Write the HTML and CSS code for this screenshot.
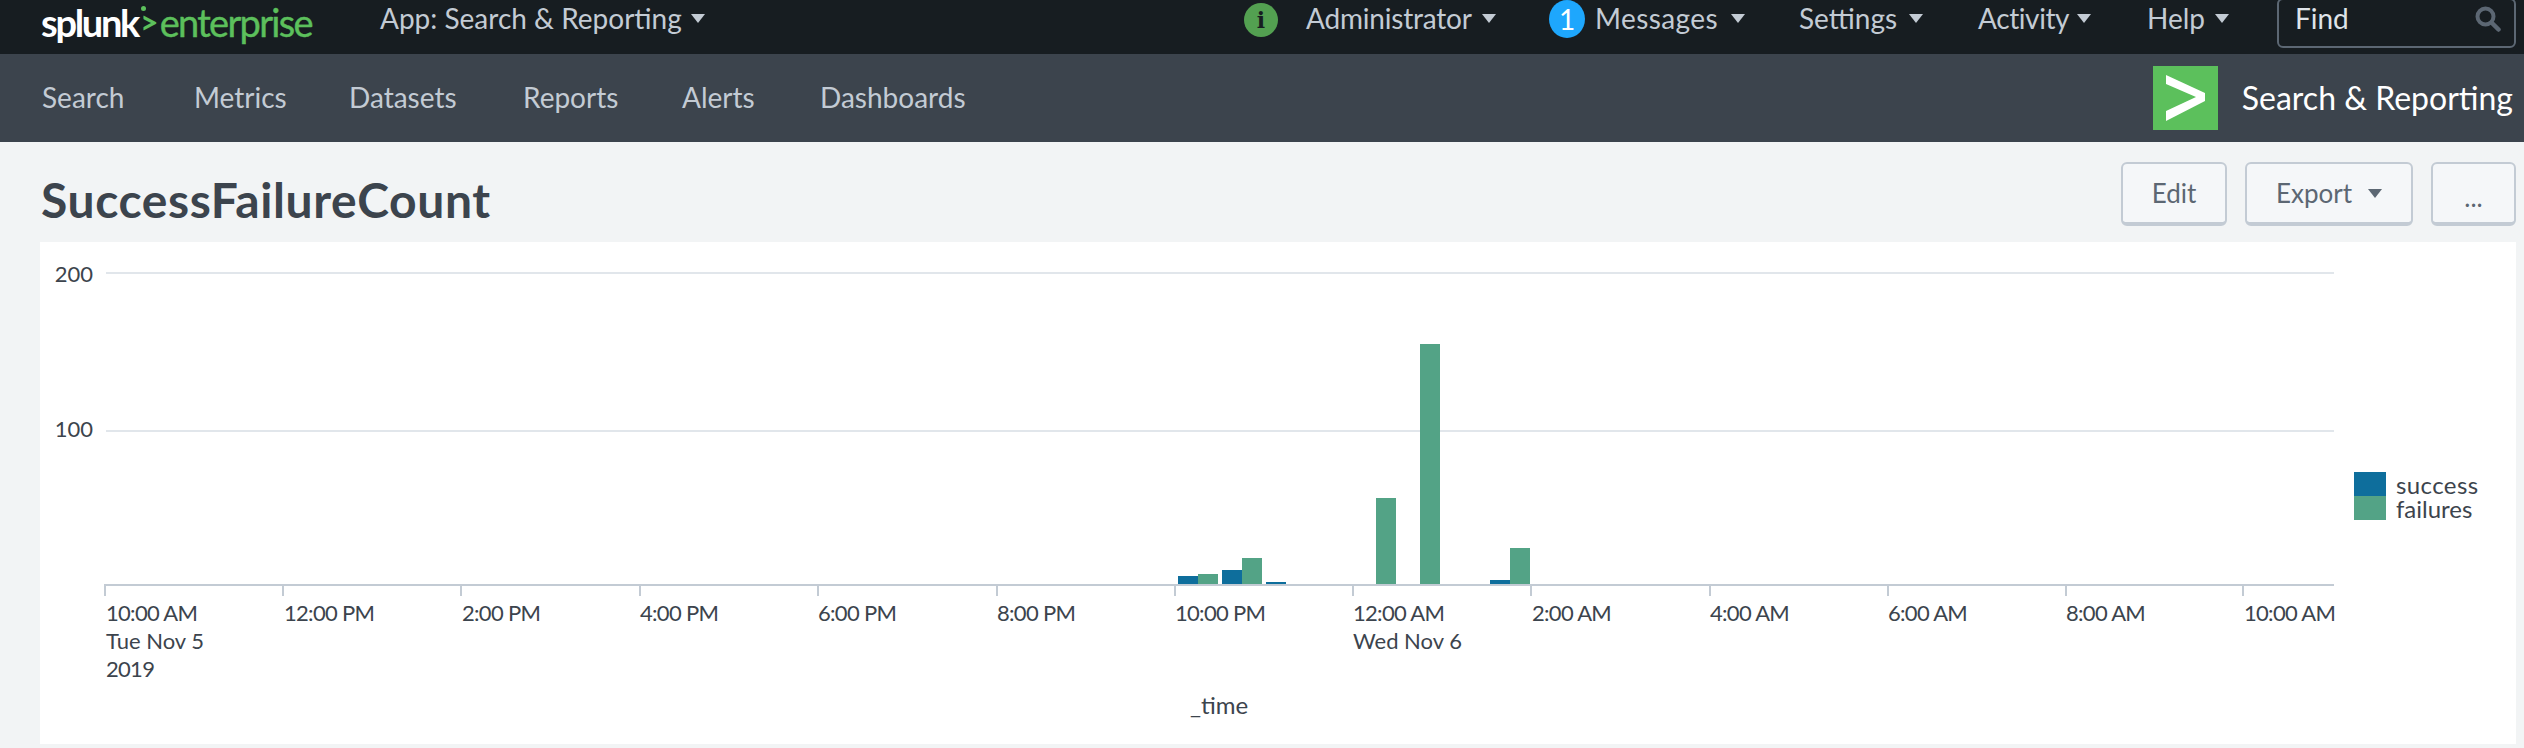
FILE: index.html
```html
<!DOCTYPE html>
<html lang="en">
<head>
<meta charset="utf-8">
<title>SuccessFailureCount</title>
<link rel="stylesheet" href="styles.css">
</head>
<body>
<header class="topbar">
  <div class="logo"><span class="logo-w">splunk</span><span class="logo-gt">&gt;</span><span class="logo-g">enterprise</span></div>
  <a class="menu app-menu">App: Search &amp; Reporting<i class="caret"></i></a>
  <div class="top-right">
    <span class="badge badge-info">i</span>
    <a class="menu m-admin">Administrator<i class="caret"></i></a>
    <span class="badge badge-msg">1</span>
    <a class="menu m-msg">Messages<i class="caret"></i></a>
    <a class="menu m-set">Settings<i class="caret"></i></a>
    <a class="menu m-act">Activity<i class="caret"></i></a>
    <a class="menu m-help">Help<i class="caret"></i></a>
    <div class="find"><span>Find</span>
      <svg class="find-icon" width="28" height="26" viewBox="0 0 28 26"><circle cx="11.5" cy="10.5" r="8" fill="none" stroke="#5c6773" stroke-width="4"/><path d="M17.5 16.5l7 7" stroke="#5c6773" stroke-width="4.5" stroke-linecap="round"/></svg>
    </div>
  </div>
</header>
<nav class="appbar">
  <a>Search</a><a>Metrics</a><a>Datasets</a><a>Reports</a><a>Alerts</a><a>Dashboards</a>
  <div class="app-brand">
    <svg class="app-logo" width="65" height="64" viewBox="0 0 65 64"><rect width="65" height="64" fill="#5cc05c"/><path d="M13 9L52 27V35L13 55V45L43 31L13 18z" fill="#fff"/></svg>
    <span>Search &amp; Reporting</span>
  </div>
</nav>
<main>
  <div class="page-head">
    <h1>SuccessFailureCount</h1>
    <div class="actions">
      <button class="btn b-edit">Edit</button>
      <button class="btn b-export">Export<i class="caret caret-dark"></i></button>
      <button class="btn b-more">...</button>
    </div>
  </div>
  <section class="panel">
    <svg class="chart" width="2476" height="502" viewBox="40 242 2476 502">
      <g class="grid"><rect x="106" y="272" width="2228" height="2"/><rect x="106" y="430" width="2228" height="2"/></g>
      <g class="axis">
        <rect x="104" y="584" width="2230" height="2"/>
        <rect x="104" y="584" width="2" height="12"/><rect x="282" y="584" width="2" height="12"/><rect x="460" y="584" width="2" height="12"/><rect x="639" y="584" width="2" height="12"/><rect x="817" y="584" width="2" height="12"/><rect x="996" y="584" width="2" height="12"/><rect x="1174" y="584" width="2" height="12"/><rect x="1352" y="584" width="2" height="12"/><rect x="1530" y="584" width="2" height="12"/><rect x="1709" y="584" width="2" height="12"/><rect x="1887" y="584" width="2" height="12"/><rect x="2065" y="584" width="2" height="12"/><rect x="2242" y="584" width="2" height="12"/>
      </g>
      <g class="s-blue"><rect x="1178" y="576" width="20" height="8"/><rect x="1222" y="570" width="20" height="14"/><rect x="1266" y="582" width="20" height="2"/><rect x="1490" y="580" width="20" height="4"/></g>
      <g class="s-green"><rect x="1198" y="574" width="20" height="10"/><rect x="1242" y="558" width="20" height="26"/><rect x="1376" y="498" width="20" height="86"/><rect x="1420" y="344" width="20" height="240"/><rect x="1510" y="548" width="20" height="36"/></g>
      <g class="labels">
        <text x="93" y="282" text-anchor="end">200</text>
        <text x="93" y="437" text-anchor="end">100</text>
        <g class="ticks">
        <text x="106" y="621">10:00 AM</text>
        <text x="284" y="621">12:00 PM</text>
        <text x="462" y="621">2:00 PM</text>
        <text x="640" y="621">4:00 PM</text>
        <text x="818" y="621">6:00 PM</text>
        <text x="997" y="621">8:00 PM</text>
        <text x="1175" y="621">10:00 PM</text>
        <text x="1353" y="621">12:00 AM</text>
        <text x="1532" y="621">2:00 AM</text>
        <text x="1710" y="621">4:00 AM</text>
        <text x="1888" y="621">6:00 AM</text>
        <text x="2066" y="621">8:00 AM</text>
        <text x="2244" y="621">10:00 AM</text>
        <text x="106" y="677">2019</text>
        </g>
        <text x="106" y="649">Tue Nov 5</text>
        <text x="1353" y="649">Wed Nov 6</text>
        <text class="big" x="1190" y="714">_time</text>
      </g>
      <rect class="sw-blue" x="2354" y="472" width="32" height="24"/><rect class="sw-green" x="2354" y="496" width="32" height="24"/>
      <g class="labels">
        <text class="big legend" x="2396" y="494">success</text>
        <text class="big" x="2396" y="518">failures</text>
      </g>
    </svg>
  </section>
</main>
</body>
</html>
```
FILE: styles.css
```css
* { box-sizing: border-box; }
html, body { margin: 0; height: 748px; overflow: hidden; }
body { background: #f2f4f5; font-family: Lato, "Liberation Sans", sans-serif; width: 2524px; }

.topbar { height: 54px; background: #171d21; display: flex; align-items: flex-start; padding-left: 41px; color: #c3cbd4; font-size: 28px; line-height: 36px; }
.logo { width: 339px; font-size: 38px; line-height: 44px; display: flex; }
.logo-w { color: #fff; font-weight: 700; letter-spacing: -2.3px; }
.logo-gt { color: #5cc05c; font-weight: 700; font-size: 32px; position: relative; margin: 0 1px 0 2px; }
.logo-gt::before { content: ""; position: absolute; left: 1px; top: 6px; width: 5px; height: 5px; border-radius: 50%; background: #5cc05c; }
.logo-g { color: #5cc05c; letter-spacing: -1.7px; -webkit-text-stroke: 0.4px #5cc05c; }

.menu { display: inline-flex; align-items: center; justify-content: space-between; white-space: nowrap; }
.caret { display: inline-block; flex: none; width: 0; height: 0; border-left: 7px solid transparent; border-right: 7px solid transparent; border-top: 9px solid #c3cbd4; margin-top: 1px; }
.caret-dark { border-top-color: #5c6773; margin-left: 16px; }
.app-menu { width: 325px; }

.top-right { margin-left: auto; margin-right: 8px; display: grid; grid-template-columns: 62px 243px 46px 204px 179px 169px 130px 239px; align-items: start; }
.badge { display: flex; align-items: center; justify-content: center; border-radius: 50%; }
.badge-info { width: 34px; height: 34px; margin-top: 3px; background: #53a051; color: #171d21; font: 700 22px "DejaVu Serif", serif; }
.badge-msg { width: 36px; height: 38px; background: #1ea7fd; color: #fff; font-size: 28px; }
.m-admin { width: 190px; letter-spacing: -0.2px; }
.m-msg { width: 150px; letter-spacing: 0.4px; }
.m-set { width: 124px; }
.m-act { width: 113px; letter-spacing: -0.4px; }
.m-help { width: 82px; }

.find { width: 239px; height: 50px; margin-top: -2px; border: 2px solid #5c6773; border-radius: 6px; display: flex; align-items: center; justify-content: space-between; padding: 0 12px 10px 16px; }
.find-icon { margin-top: 2px; }
.find span { color: #dfe4e9; }

.appbar { height: 88px; background: #3c444d; display: grid; grid-template-columns: 152px 155px 174px 159px 138px auto 1fr; align-items: center; padding: 0 11px 2px 42px; color: #c3cbd4; font-size: 28px; }
.app-brand { justify-self: end; display: flex; align-items: center; gap: 24px; color: #fff; font-size: 32px; margin-top: 2px; }
.app-brand span { margin-top: -2px; }
.app-logo { display: block; }

.page-head { height: 100px; padding: 20px 8px 0 41px; display: flex; justify-content: space-between; align-items: flex-start; }
h1 { margin: 10px 0 0; font-size: 48px; font-weight: 700; letter-spacing: 0.6px; line-height: 56px; color: #3c444d; }
.actions { display: flex; gap: 18px; }
.btn { height: 64px; padding: 0; font: 26px Lato, "Liberation Sans", sans-serif; color: #5c6773; background: #f5f7f9; border: 2px solid #c3cbd4; border-bottom-width: 4px; border-radius: 6px; display: flex; align-items: center; justify-content: center; }
.b-edit { width: 106px; }
.b-export { width: 168px; }
.b-more { width: 85px; padding-top: 8px; }

.panel { margin-left: 40px; width: 2476px; height: 502px; background: #fff; }
.chart { display: block; }
.grid rect { fill: #e1e6eb; }
.axis rect { fill: #c3cbd4; }
.s-blue rect, .sw-blue { fill: #0e6e9c; }
.s-green rect, .sw-green { fill: #53a386; }
.labels text { font-size: 22px; fill: #3c444d; }
.labels .big { font-size: 24px; }
.labels .legend { letter-spacing: 0.4px; }
.ticks text { letter-spacing: -0.7px; }
```
